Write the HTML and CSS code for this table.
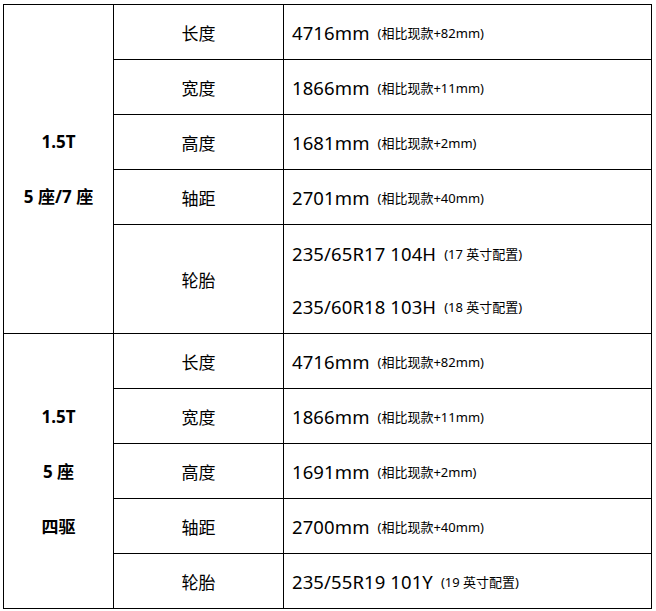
FILE: index.html
```html
<!DOCTYPE html>
<html lang="zh-CN">
<head>
<meta charset="utf-8">
<title>尺寸参数</title>
<link rel="stylesheet" href="styles.css">
</head>
<body>
<div class="spec">
  <div class="cell group g1"><p>1.5T</p><p>5 座/7 座</p></div>
  <div class="cell label">长度</div>
  <div class="cell value"><span class="num">4716mm</span><span class="note">(相比现款+82mm)</span></div>
  <div class="cell label">宽度</div>
  <div class="cell value"><span class="num">1866mm</span><span class="note">(相比现款+11mm)</span></div>
  <div class="cell label">高度</div>
  <div class="cell value"><span class="num">1681mm</span><span class="note">(相比现款+2mm)</span></div>
  <div class="cell label">轴距</div>
  <div class="cell value"><span class="num">2701mm</span><span class="note">(相比现款+40mm)</span></div>
  <div class="cell label">轮胎</div>
  <div class="cell value multi">
    <div class="line"><span class="num">235/65R17 104H</span><span class="note">(17 英寸配置)</span></div>
    <div class="line"><span class="num">235/60R18 103H</span><span class="note">(18 英寸配置)</span></div>
  </div>

  <div class="cell group g2"><p>1.5T</p><p>5 座</p><p>四驱</p></div>
  <div class="cell label">长度</div>
  <div class="cell value"><span class="num">4716mm</span><span class="note">(相比现款+82mm)</span></div>
  <div class="cell label">宽度</div>
  <div class="cell value"><span class="num">1866mm</span><span class="note">(相比现款+11mm)</span></div>
  <div class="cell label">高度</div>
  <div class="cell value"><span class="num">1691mm</span><span class="note">(相比现款+2mm)</span></div>
  <div class="cell label">轴距</div>
  <div class="cell value"><span class="num">2700mm</span><span class="note">(相比现款+40mm)</span></div>
  <div class="cell label">轮胎</div>
  <div class="cell value"><span class="num">235/55R19 101Y</span><span class="note">(19 英寸配置)</span></div>
</div>
</body>
</html>
```
FILE: styles.css
```css
html, body {
  margin: 0;
  padding: 0;
  background: #fff;
}
body {
  padding: 4px 0 0 3px;
  font-family: "Noto Sans", "Noto Sans CJK SC", sans-serif;
  color: #000;
}
.spec {
  display: grid;
  width: 649px;
  box-sizing: border-box;
  grid-template-columns: 110px 170px 368px;
  grid-template-rows: repeat(4, 55px) 109px repeat(5, 55px);
  border-top: 1px solid #000;
  border-left: 1px solid #000;
}
.cell {
  box-sizing: border-box;
  border-right: 1px solid #000;
  border-bottom: 1px solid #000;
  display: flex;
  align-items: center;
}
.group {
  grid-column: 1;
  flex-direction: column;
  justify-content: center;
  font-weight: bold;
  font-size: 17px;
}
.g1 { grid-row: 1 / span 5; }
.g2 { grid-row: 6 / span 5; }
.group p {
  margin: 0;
  line-height: 55px;
  text-align: center;
}
.label {
  grid-column: 2;
  justify-content: center;
  font-family: "Noto Sans CJK SC", sans-serif;
  font-size: 17px;
}
.value {
  grid-column: 3;
  padding-left: 8px;
}
.multi {
  flex-direction: column;
  align-items: flex-start;
  justify-content: center;
  padding-top: 2px;
}
.line {
  height: 54px;
  display: flex;
  align-items: center;
}
.num {
  font-size: 18.5px;
  letter-spacing: 0.1px;
}
.note {
  font-size: 13px;
  margin-left: 8px;
  font-family: "Noto Sans", "Noto Sans CJK SC", sans-serif;
}
```
